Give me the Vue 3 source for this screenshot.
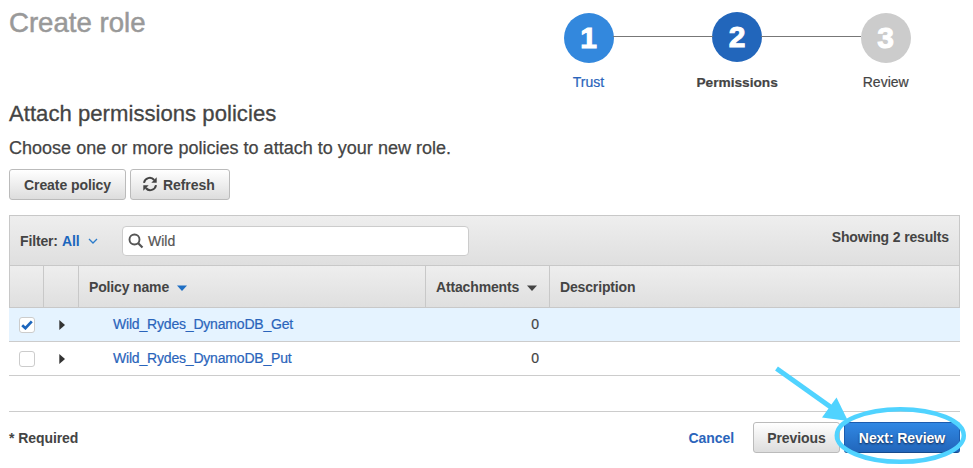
<script setup>
const steps = [
  { number: 1, label: 'Trust', state: 'done' },
  { number: 2, label: 'Permissions', state: 'current' },
  { number: 3, label: 'Review', state: 'upcoming' },
]
const policies = [
  { name: 'Wild_Rydes_DynamoDB_Get', attachments: 0, selected: true },
  { name: 'Wild_Rydes_DynamoDB_Put', attachments: 0, selected: false },
]
</script>

<template>
  <main class="page">
    <header class="top">
      <h1>Create role</h1>
      <ol class="steps">
        <li v-for="s in steps" :key="s.number" :class="['step', s.state]">
          <span class="disc">{{ s.number }}</span>
          <span class="label">{{ s.label }}</span>
        </li>
      </ol>
    </header>

    <h2>Attach permissions policies</h2>
    <p class="intro">Choose one or more policies to attach to your new role.</p>

    <div class="actions">
      <button class="btn create">Create policy</button>
      <button class="btn refresh">
        <svg width="16" height="16" viewBox="0 0 16 16">
          <path d="M2 6.8A5.8 5.8 0 0 1 12.2 4M14 9.2A5.8 5.8 0 0 1 3.8 12" fill="none" stroke="#444" stroke-width="2" />
          <path d="M14.7 1.3v5.4H9.3zM1.3 14.7V9.3h5.4z" fill="#444" />
        </svg>
        <span>Refresh</span>
      </button>
    </div>

    <section class="table">
      <div class="toolbar">
        <span class="filter">Filter:</span>
        <a class="all">All</a>
        <svg class="chevron" width="10" height="6" viewBox="0 0 10 6">
          <path d="M1 1l4 4 4-4" fill="none" stroke="#2a7bcb" stroke-width="1.3" />
        </svg>
        <div class="search">
          <svg width="16" height="16" viewBox="0 0 16 16">
            <circle cx="6.5" cy="6.5" r="5" fill="none" stroke="#555" stroke-width="1.9" />
            <path d="M10.2 10.2l4.3 4.3" stroke="#555" stroke-width="2.2" />
          </svg>
          <span>Wild</span>
        </div>
        <span class="count">Showing 2 results</span>
      </div>
      <div class="row head">
        <span></span>
        <span></span>
        <span class="cell name-head">Policy name
          <svg width="10" height="6" viewBox="0 0 10 6"><path d="M0 .5h10L5 6z" fill="#1f6fc4" /></svg>
        </span>
        <span class="cell att-head">Attachments
          <svg width="10" height="6" viewBox="0 0 10 6"><path d="M0 .5h10L5 6z" fill="#444" /></svg>
        </span>
        <span class="cell">Description</span>
      </div>
      <div v-for="p in policies" :key="p.name" :class="['row', 'body', { selected: p.selected }]">
        <span class="check-cell">
          <span class="check">
            <svg v-if="p.selected" width="12" height="10" viewBox="0 0 12 10">
              <path d="M1.2 5.2l3.2 3L10.8 1.3" fill="none" stroke="#1c66bd" stroke-width="2.7" />
            </svg>
          </span>
        </span>
        <span class="expand">
          <svg width="6" height="10" viewBox="0 0 6 10"><path d="M.3 0v10L6 5z" fill="#333" /></svg>
        </span>
        <a class="name">{{ p.name }}</a>
        <span class="num">{{ p.attachments }}</span>
        <span></span>
      </div>
    </section>

    <footer>
      <span class="required">* Required</span>
      <a class="cancel">Cancel</a>
      <button class="btn previous">Previous</button>
      <button class="btn primary">Next: Review</button>
    </footer>

    <svg class="annotation" width="200" height="108" viewBox="773 360 200 108">
      <ellipse cx="900.3" cy="435.5" rx="63.5" ry="26.3" fill="none" stroke="#50d3ff" stroke-width="4.5" />
      <path d="M776.5 368.5L832 408" stroke="#50d3ff" stroke-width="5" />
      <path d="M848 421L836.5 397.5L822 417.5z" fill="#50d3ff" />
    </svg>
  </main>
</template>

<style>
body {
  background: #fff;
}
</style>

<style scoped>
.page {
  position: relative;
  box-sizing: border-box;
  width: 973px;
  height: 468px;
  padding: 0 13px 0 9px;
  overflow: hidden;
  color: #444;
  font: 14px/18px "Liberation Sans", Arial, sans-serif;
}
.top {
  display: flex;
  justify-content: space-between;
  height: 98px;
}
h1 {
  margin: 7px 0 0;
  color: #999;
  font-size: 27.6px;
  font-weight: 400;
  line-height: 32px;
  -webkit-text-stroke: 0.5px #999;
}
.steps {
  display: grid;
  grid-template-columns: repeat(3, 148.6px);
  margin: 0;
  padding: 12px 0 0;
  list-style: none;
}
.step {
  display: flex;
  flex-direction: column;
  align-items: center;
  position: relative;
}
.step + .step::before {
  content: "";
  position: absolute;
  top: 24px;
  left: -50px;
  width: 100px;
  height: 1px;
  background: #777;
}
.disc {
  box-sizing: border-box;
  width: 50px;
  height: 50px;
  margin-top: 1px;
  border-radius: 50%;
  color: #fff;
  font: bold 30px/50px "Liberation Sans", Arial, sans-serif;
  text-align: center;
  -webkit-text-stroke: 1px #fff;
}
.label {
  margin-top: 10px;
  -webkit-text-stroke: 0.2px;
}
.done .disc {
  background: #3388dd;
}
.done .label {
  color: #2a64bb;
}
.current .disc {
  margin-top: 0;
  background: #2266bb;
}
.current .label {
  margin-top: 12px;
  font-weight: bold;
  font-size: 13.7px;
}
.upcoming .disc {
  background: #ccc;
}
h2 {
  margin: 3px 0 0;
  font-size: 22.1px;
  font-weight: 400;
  line-height: 26px;
  letter-spacing: 0.03px;
  -webkit-text-stroke: 0.3px;
}
.intro {
  margin: 10px 0 0;
  font-size: 18px;
  line-height: 22px;
  letter-spacing: 0.015px;
  -webkit-text-stroke: 0.25px;
}
.actions {
  display: flex;
  gap: 4px;
  margin-top: 10px;
}
.btn {
  box-sizing: border-box;
  display: flex;
  align-items: center;
  justify-content: center;
  height: 31px;
  padding: 0;
  border: 1px solid #bbb;
  border-radius: 3px;
  background: linear-gradient(#fff, #ddd);
  color: #444;
  font: bold 14px/18px "Liberation Sans", Arial, sans-serif;
  letter-spacing: -0.07px;
}
.create {
  width: 117px;
}
.refresh {
  justify-content: flex-start;
  gap: 5px;
  width: 100px;
  padding-left: 11px;
}
.refresh svg {
  margin-top: -2px;
}
.table {
  margin-top: 15px;
}
.toolbar {
  box-sizing: border-box;
  display: flex;
  align-items: center;
  height: 50px;
  padding: 0 10px;
  border: 1px solid #c8c8c8;
  border-bottom: 0;
  background: linear-gradient(#eee, #dfdfdf);
  font-weight: bold;
  letter-spacing: -0.15px;
}
.filter {
  width: 42px;
}
.all {
  width: 26px;
  padding-top: 1px;
  color: #1c66bd;
}
.chevron {
  margin-right: 24px;
}
.search {
  box-sizing: border-box;
  display: flex;
  align-items: center;
  gap: 4px;
  width: 347px;
  height: 30px;
  padding-left: 5px;
  border: 1px solid #ccc;
  border-radius: 4px;
  background: #fff;
  color: #555;
  font-weight: 400;
  letter-spacing: 0;
  -webkit-text-stroke: 0.2px;
}
.count {
  margin: 0 0 7px auto;
}
.row {
  display: grid;
  grid-template-columns: 35px 35px 347px 124px 1fr;
  box-sizing: border-box;
}
.head {
  grid-template-columns: 34px 35px 347px 124px 1fr;
  height: 43px;
  border: 1px solid #c8c8c8;
  background: linear-gradient(#eee, #dfdfdf);
  font-weight: bold;
  letter-spacing: -0.15px;
}
.head > span {
  box-sizing: border-box;
  border-right: 1px solid #c8c8c8;
}
.head > span:last-child {
  border-right: 0;
}
.cell {
  display: flex;
  align-items: center;
  gap: 8px;
  padding-left: 10px;
}
.cell svg {
  margin-top: 2px;
}
.body {
  height: 34px;
  border-bottom: 1px solid #ccc;
  align-items: center;
}
.selected {
  background: #e5f3ff;
}
.check-cell {
  padding-left: 10px;
}
.check {
  box-sizing: border-box;
  display: flex;
  align-items: center;
  justify-content: center;
  width: 16px;
  height: 16px;
  border: 1px solid #ccc;
  border-radius: 3px;
  background: #fff;
}
.expand {
  display: flex;
  padding: 1px 0 0 15px;
}
.name {
  padding: 0 0 2px 34px;
  color: #2a64bb;
  letter-spacing: -0.19px;
  -webkit-text-stroke: 0.2px;
}
.num {
  padding: 0 11px 2px 0;
  text-align: right;
  -webkit-text-stroke: 0.2px;
}
footer {
  display: flex;
  align-items: center;
  height: 51px;
  margin-top: 35px;
  border-top: 1px solid #ccc;
  font-weight: bold;
  letter-spacing: -0.07px;
}
.cancel {
  margin: 0 19px 0 auto;
  color: #2a64bb;
}
.previous {
  width: 87px;
  margin-right: 4px;
}
.primary {
  width: 116px;
  border-color: #1c5cae #1c5cae #154a8c;
  background: linear-gradient(#3088e4, #2266bb);
  color: #fff;
  text-shadow: 0 1px 2px #124;
}
.annotation {
  position: absolute;
  top: 360px;
  left: 773px;
}
</style>
